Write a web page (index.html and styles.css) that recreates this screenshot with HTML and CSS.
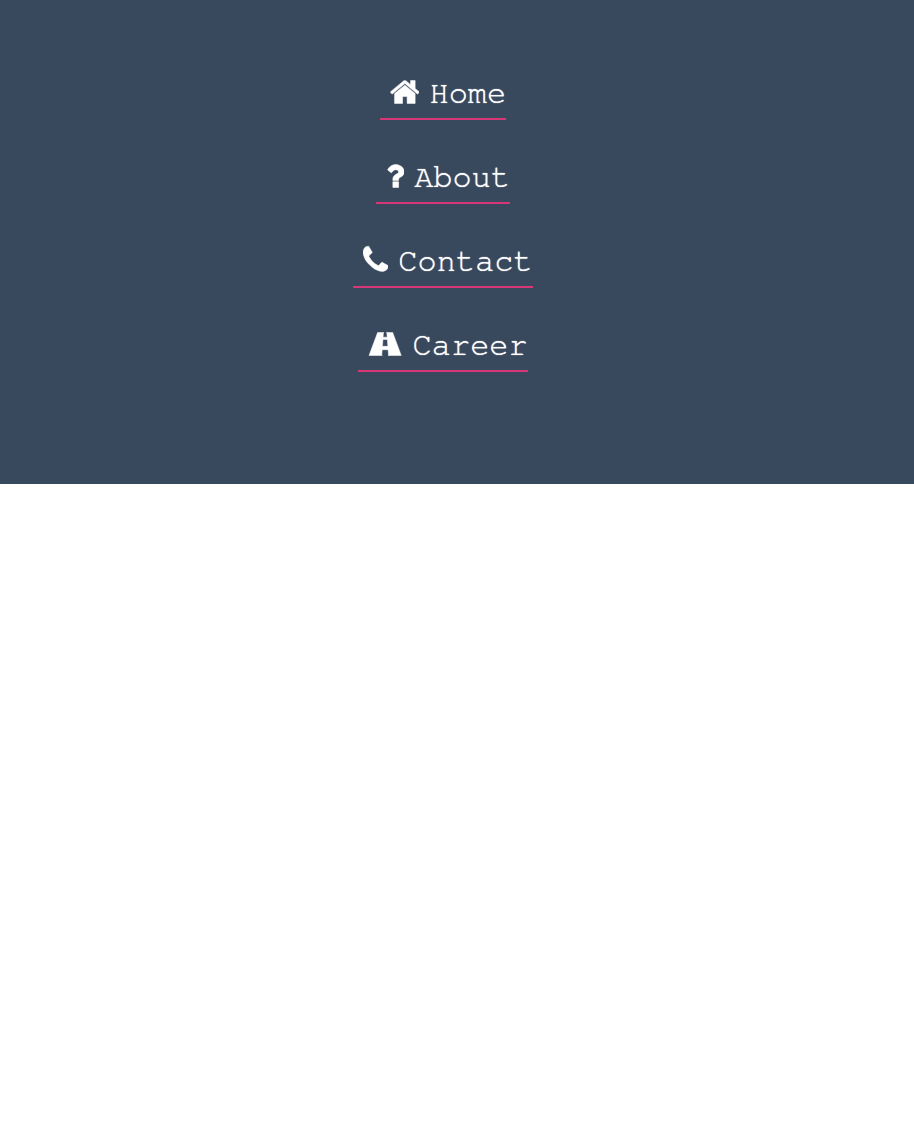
FILE: index.html
```html
<!DOCTYPE html>
<html lang="en">
<head>
<meta charset="utf-8">
<meta name="viewport" content="width=device-width, initial-scale=1">
<title>Navigation</title>
<link rel="stylesheet" href="styles.css">
</head>
<body>
<nav class="nav">
  <ul class="nav-list">
    <li>
      <a class="nav-link" href="#home">
        <svg class="icon" viewBox="64 0 1664 1792" aria-hidden="true"><path d="M1472 992v544h-448v-384h-256v384h-448v-544q0-1 .5-3t.5-3l575-474 575 474q1 2 1 6zm223-69l-62 74q-8 9-21 11h-3q-13 0-21-7l-692-577-692 577q-12 8-24 7-13-2-21-11l-62-74q-8-10-7-23.5t11-21.5l719-599q32-26 76-26t76 26l244 204v-227h256v440l219 182q10 8 11 21.5t-7 23.5z"/></svg>
        <span>Home</span>
      </a>
    </li>
    <li>
      <a class="nav-link" href="#about">
        <svg class="icon" viewBox="384 0 1024 1792" aria-hidden="true"><path d="M1088 1216v320h-320v-320zM1404 656q0 54-15.5 101t-35 76.5-55 59.5-57.5 43.5-61 35.5q-41 23-68.5 65t-27.5 67v48h-316v-101q0-83 65-156.5t143-108.5q59-27 84-56t25-76q0-42-46.5-74t-107.5-32q-65 0-108 29-35 25-107 115-13 16-31 16-12 0-25-8l-164-125q-13-10-15.5-25t5.5-28q160-266 464-266 80 0 161 31t146 83 106 127.5 41 158.5z"/></svg>
        <span>About</span>
      </a>
    </li>
    <li>
      <a class="nav-link" href="#contact">
        <svg class="icon" viewBox="192 0 1408 1792" aria-hidden="true"><path d="M1600 1240q0 27-10 70.5t-21 68.5q-21 50-122 106-94 51-186 51-27 0-53-3.5t-57.5-12.5-47-14.5-55.5-20.5-49-18q-98-35-175-83-127-79-264-216t-216-264q-48-77-83-175-3-9-18-49t-20.5-55.5-14.5-47-12.5-57.5-3.5-53q0-92 51-186 56-101 106-122 25-11 68.5-21t70.5-10q14 0 21 3 18 6 53 76 11 19 30 54t35 63.5 31 53.5q3 4 17.5 25t21.5 35.5 7 28.5q0 20-28.5 50t-62 55-62 53-28.5 46q0 9 5 22.5t8.5 20.5 14 24 11.5 19q76 137 174 235t235 174q2 1 19 11.5t24 14 20.5 8.5 22.5 5q18 0 46-28.5t53-62 55-62 50-28.5q14 0 28.5 7t35.5 21.5 25 17.5q25 15 53.5 31t63.5 35 54 30q70 35 76 53 3 7 3 21z"/></svg>
        <span>Contact</span>
      </a>
    </li>
    <li>
      <a class="nav-link" href="#career">
        <svg class="icon" viewBox="0 0 1920 1792" aria-hidden="true"><path transform="translate(0 1536) scale(1 -1)" d="M1111 540v4l-24 320q-1 13-11 22.5t-23 9.5h-186q-13 0-23-9.5t-11-22.5l-24-320v-4q-1-12 8-20t21-8h244q12 0 21 8t8 20zM1860 0h-740q13 0 22 9.5t8 22.5l-20 256q-1 13-11 22.5t-23 9.5h-272q-13 0-23-9.5t-11-22.5l-20-256q-1-13 8-22.5t22-9.5h-740l478 1280h358q-13 0-23-9.5t-11-22.5l-15-192q-1-14 8-23t22-9h166q13 0 22 9t8 23l-15 192q-1 13-11 22.5t-23 9.5h358z"/></svg>
        <span>Career</span>
      </a>
    </li>
  </ul>
</nav>
</body>
</html>
```
FILE: styles.css
```css
body {
  margin: 0;
  background: #fff;
  font-family: "Nimbus Mono PS", "FreeMono", "Courier Prime", "Liberation Mono", "Courier New", monospace;
}

.nav {
  padding: 76px 28px 112px 0;
  background: #39495d;
}

.nav-list {
  display: flex;
  flex-direction: column;
  align-items: center;
  gap: 40px;
  margin: 0;
  padding: 0;
  list-style: none;
}

.nav-link {
  display: flex;
  align-items: flex-start;
  padding-bottom: 8px;
  border-bottom: 2px solid #d63877;
  color: #fff;
  font-size: 32px;
  line-height: 34px;
  text-decoration: none;
  text-shadow: 0 0 1px #fff;
}

.icon {
  height: 32px;
  margin: 0 10px;
  fill: currentColor;
  stroke: currentColor;
  stroke-width: 30;
}
```
